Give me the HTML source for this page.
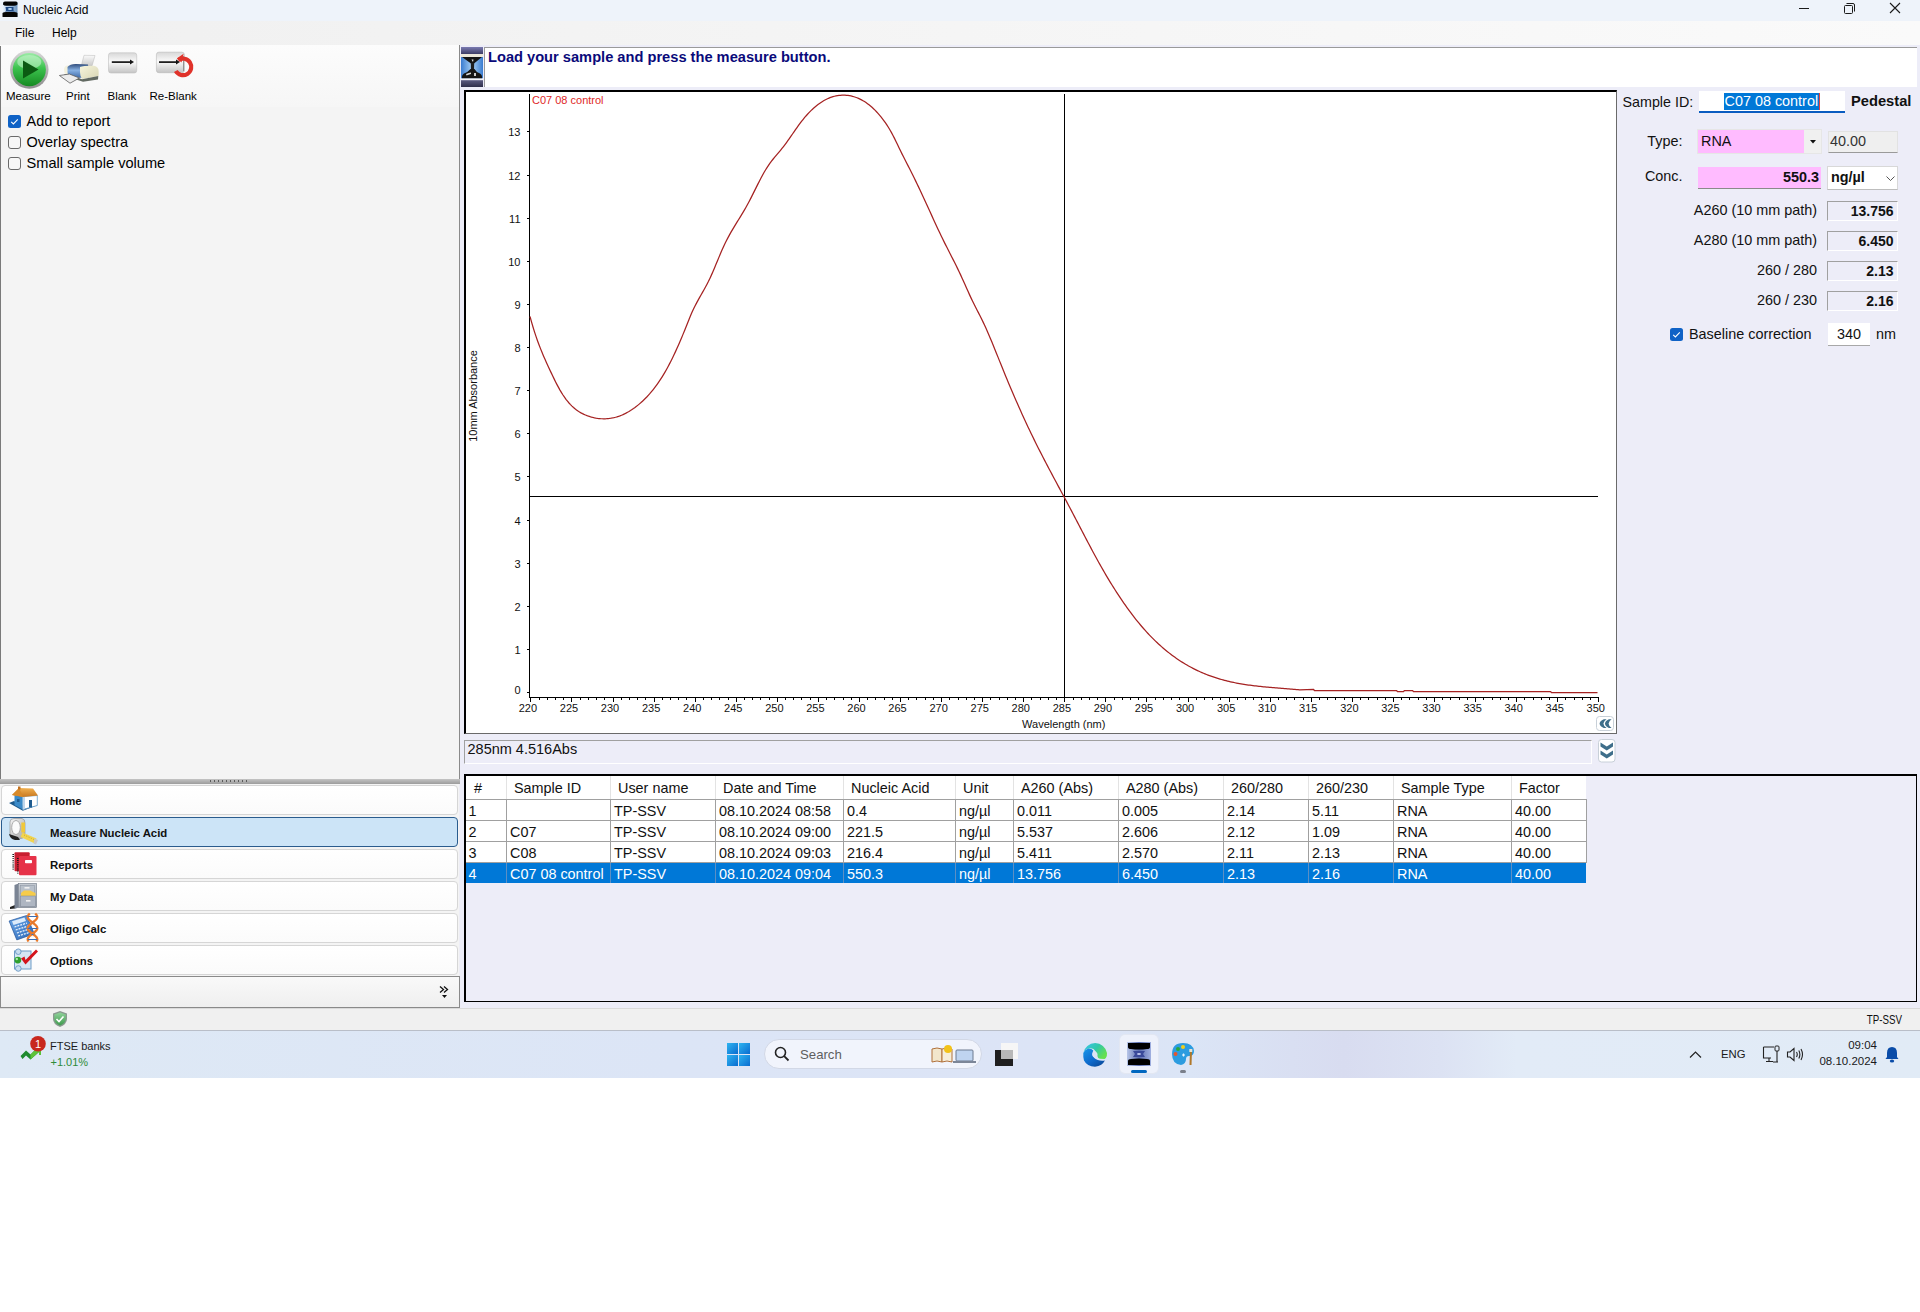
<!DOCTYPE html><html><head><meta charset="utf-8"><style>html,body{margin:0;padding:0;width:1920px;height:1312px;overflow:hidden;position:relative;font-family:"Liberation Sans", sans-serif;background:#fff}</style></head><body><div style="position:absolute;left:0px;top:0px;width:1920px;height:21px;background:#EEF3FA"></div>
<div style="position:absolute;left:0px;top:21px;width:1920px;height:24px;background:linear-gradient(to right,#F0F0F0,#FAFAFA)"></div>
<div style="position:absolute;left:0px;top:45px;width:459px;height:963px;background:#F4F4F4"></div>
<div style="position:absolute;left:0px;top:45px;width:459px;height:62px;background:linear-gradient(#FCFCFC,#F6F6F6)"></div>
<div style="position:absolute;left:0px;top:46px;width:1px;height:734px;background:#7A7A7A"></div>
<div style="position:absolute;left:459px;top:45px;width:1px;height:734px;background:#8A8A8A"></div>
<div style="position:absolute;left:459px;top:784px;width:1px;height:192px;background:#EEEEF6"></div>
<div style="position:absolute;left:460px;top:45px;width:1460px;height:963px;background:#EDEDF8"></div>
<div style="position:absolute;left:0px;top:1078px;width:1920px;height:234px;background:#FFFFFF"></div>
<div style="position:absolute;left:23px;top:3.55px;font-size:12px;font-weight:400;color:#000;line-height:1;white-space:nowrap;">Nucleic Acid</div>
<svg style="position:absolute;left:2px;top:1px" width="16" height="16" viewBox="0 0 16 16">
<defs><linearGradient id="gTi" x1="0" y1="0" x2="1" y2="0"><stop offset="0" stop-color="#EAF4FF"/><stop offset="0.5" stop-color="#A8C4E4"/><stop offset="1" stop-color="#6E96C0"/></linearGradient></defs>
<rect x="0.5" y="1" width="15" height="15" fill="url(#gTi)"/>
<path d="M1 2.5 Q1 0.5 3 0.5 H14 Q15.5 0.5 15.5 2.5 V3.5 Q14 4.8 12 4.8 H4 Q2 4.8 1 3.5 Z" fill="#050505"/>
<path d="M0.5 12 Q1.5 11 4 11 H12 Q14.5 11 15.5 12 V15.5 Q15.5 16 15 16 H1 Q0.5 16 0.5 15.5 Z" fill="#050505"/>
<path d="M3.5 6 H11.5 V9.5 Q12.5 10 13 10.5 H3 Q3.5 10 4 9.5 Z" fill="#1E4A86"/>
<ellipse cx="8" cy="8" rx="2" ry="1" fill="#B8D8F8"/></svg>
<div style="position:absolute;left:1799px;top:8px;width:10px;height:1px;background:#1a1a1a"></div>
<svg style="position:absolute;left:1843px;top:2px" width="13" height="13" viewBox="0 0 13 13" fill="none" stroke="#1a1a1a" stroke-width="1">
<rect x="1.5" y="3.5" width="8" height="8" rx="1"/><path d="M3.5 1.5 H10 Q11.5 1.5 11.5 3 V9.5"/></svg>
<svg style="position:absolute;left:1889px;top:2px" width="12" height="12" viewBox="0 0 12 12" stroke="#1a1a1a" stroke-width="1.1">
<path d="M1 1 L11 11 M11 1 L1 11"/></svg>
<div style="position:absolute;left:15px;top:26.70px;font-size:12px;font-weight:400;color:#000;line-height:1;white-space:nowrap;">File</div>
<div style="position:absolute;left:52px;top:26.70px;font-size:12px;font-weight:400;color:#000;line-height:1;white-space:nowrap;">Help</div>
<svg style="position:absolute;left:0;top:45px" width="210" height="45" viewBox="0 45 210 45">
<defs>
<linearGradient id="gRing" x1="0" y1="0" x2="0" y2="1"><stop offset="0" stop-color="#D8D8D8"/><stop offset="1" stop-color="#8E8E8E"/></linearGradient>
<linearGradient id="gGreen" x1="0" y1="0" x2="0" y2="1"><stop offset="0" stop-color="#9BEBA6"/><stop offset="0.45" stop-color="#3CC34E"/><stop offset="1" stop-color="#168A22"/></linearGradient>
<linearGradient id="gBlank" x1="0" y1="0" x2="0" y2="1"><stop offset="0" stop-color="#F4F4F4"/><stop offset="0.5" stop-color="#DCDCDC"/><stop offset="1" stop-color="#C4C4C4"/></linearGradient>
</defs>
<circle cx="29.3" cy="69.6" r="19.2" fill="url(#gRing)"/>
<circle cx="29.3" cy="69.6" r="16.6" fill="url(#gGreen)"/>
<ellipse cx="29.3" cy="62" rx="12" ry="7" fill="#C8F5CE" opacity="0.55"/>
<path d="M23 60.5 L23 78.5 L38.5 69.5 Z" fill="#0B5A12"/>
<!-- printer -->
<linearGradient id="gPb" x1="0" y1="0" x2="0" y2="1"><stop offset="0" stop-color="#2E4A7A"/><stop offset="0.45" stop-color="#86B0E2"/><stop offset="1" stop-color="#3E6AA8"/></linearGradient>
<linearGradient id="gPc" x1="0" y1="0" x2="1" y2="1"><stop offset="0" stop-color="#F6F4DC"/><stop offset="1" stop-color="#D8D6B4"/></linearGradient>
<linearGradient id="gPp" x1="0" y1="0" x2="0" y2="1"><stop offset="0" stop-color="#FAFAFA"/><stop offset="1" stop-color="#C8C8C8"/></linearGradient>
<path d="M84 55.3 L95 55.5 L92 66 L81.2 66 Z" fill="url(#gPp)" stroke="#B8B8B8" stroke-width="0.5"/>
<path d="M64 70 Q64 65.5 68 65.5 L70 66 L70 74 L66 74 Q64 73 64 70 Z" fill="#F2F0DC"/>
<path d="M67.5 67 Q70 63.8 76 63.9 L88 64.5 L89 77.5 L70 78 Q67.5 76 67.5 72 Z" fill="url(#gPb)"/>
<path d="M80 67 Q84 65.6 94 65.8 Q98.8 66.5 98.7 72 L98.5 76 L82 79 Q80 76 80 72 Z" fill="url(#gPc)"/>
<path d="M64.5 74 L70 75 L82 79.2 L98.3 76 L98 79.5 L83 81.8 L70 77.5 L64.5 76 Z" fill="#626A62"/>
<path d="M59.4 75.5 L69.4 74 L79.4 78 L70 83.2 Z" fill="#ECECEC" stroke="#5E5E5E" stroke-width="0.8"/>
<!-- blank -->
<linearGradient id="gBl2" x1="0" y1="0" x2="0" y2="1"><stop offset="0" stop-color="#D8D8D8"/><stop offset="0.45" stop-color="#FAFAFA"/><stop offset="1" stop-color="#C4C4C4"/></linearGradient>
<rect x="108.5" y="52.8" width="28.2" height="20.2" rx="2.5" fill="url(#gBl2)" stroke="#C0C0C0" stroke-width="0.6"/>
<path d="M111.8 62.1 H131" stroke="#151515" stroke-width="1.7"/><path d="M130 59.6 L134 62.1 L130 64.6 Z" fill="#151515"/>
<!-- reblank -->
<rect x="156.4" y="52.2" width="28" height="20.5" rx="2.5" fill="url(#gBl2)" stroke="#B8B8B8" stroke-width="0.6"/>
<path d="M183.6 56 V71" stroke="#8A8A8A" stroke-width="1"/>
<path d="M159 62.1 H177" stroke="#151515" stroke-width="1.7"/><path d="M176 59.6 L180 62.1 L176 64.6 Z" fill="#151515"/>
<path d="M178.2 60.1 A8.3 8.3 0 1 1 175.8 71.05" fill="none" stroke="#E0322A" stroke-width="4.2"/>
<path d="M177 58.2 L183.6 53.8 L181.5 62.5 Z" fill="#E0322A"/>
</svg>
<div style="position:absolute;left:6px;top:91.12px;font-size:11.5px;font-weight:400;color:#000;line-height:1;white-space:nowrap;">Measure</div>
<div style="position:absolute;left:66px;top:91.12px;font-size:11.5px;font-weight:400;color:#000;line-height:1;white-space:nowrap;">Print</div>
<div style="position:absolute;left:107.5px;top:91.12px;font-size:11.5px;font-weight:400;color:#000;line-height:1;white-space:nowrap;">Blank</div>
<div style="position:absolute;left:149.5px;top:91.12px;font-size:11.5px;font-weight:400;color:#000;line-height:1;white-space:nowrap;">Re-Blank</div>
<svg style="position:absolute;left:8px;top:115px" width="13" height="13" viewBox="0 0 13 13"><rect x="0" y="0" width="13" height="13" rx="2.5" fill="#0F62C6"/><path d="M3.2 6.8 L5.4 9 L9.8 4.4" fill="none" stroke="#fff" stroke-width="1.1"/></svg>
<svg style="position:absolute;left:8px;top:136px" width="13" height="13" viewBox="0 0 13 13"><rect x="0.5" y="0.5" width="12" height="12" rx="2.5" fill="#F7F7F7" stroke="#6A6A6A" stroke-width="1"/></svg>
<svg style="position:absolute;left:8px;top:157px" width="13" height="13" viewBox="0 0 13 13"><rect x="0.5" y="0.5" width="12" height="12" rx="2.5" fill="#F7F7F7" stroke="#6A6A6A" stroke-width="1"/></svg>
<div style="position:absolute;left:26.5px;top:114.38px;font-size:14.5px;font-weight:400;color:#000;line-height:1;white-space:nowrap;">Add to report</div>
<div style="position:absolute;left:26.5px;top:135.18px;font-size:14.5px;font-weight:400;color:#000;line-height:1;white-space:nowrap;">Overlay spectra</div>
<div style="position:absolute;left:26.5px;top:156.09px;font-size:14.6px;font-weight:400;color:#000;line-height:1;white-space:nowrap;">Small sample volume</div>
<div style="position:absolute;left:0px;top:779px;width:460px;height:5px;background:linear-gradient(#C4C4C4,#9C9C9C)"></div>
<div style="position:absolute;left:210px;top:780px;width:40px;height:2px;background:repeating-linear-gradient(to right,#5A5A5A 0 1px,transparent 1px 4px)"></div>
<div style="position:absolute;left:1px;top:785px;width:457px;height:30px;box-sizing:border-box;border:1px solid #D6D6D6;border-radius:4px;background:linear-gradient(#FFFFFF,#FBFBFB)"></div>
<div style="position:absolute;left:50px;top:796.21px;font-size:11.4px;font-weight:700;color:#111;line-height:1;white-space:nowrap;">Home</div>
<div style="position:absolute;left:1px;top:817px;width:457px;height:30px;box-sizing:border-box;border:1px solid #2A5C8E;border-radius:4px;background:#CCE4F7"></div>
<div style="position:absolute;left:50px;top:828.21px;font-size:11.4px;font-weight:700;color:#111;line-height:1;white-space:nowrap;">Measure Nucleic Acid</div>
<div style="position:absolute;left:1px;top:849px;width:457px;height:30px;box-sizing:border-box;border:1px solid #D6D6D6;border-radius:4px;background:linear-gradient(#FFFFFF,#FBFBFB)"></div>
<div style="position:absolute;left:50px;top:860.21px;font-size:11.4px;font-weight:700;color:#111;line-height:1;white-space:nowrap;">Reports</div>
<div style="position:absolute;left:1px;top:881px;width:457px;height:30px;box-sizing:border-box;border:1px solid #D6D6D6;border-radius:4px;background:linear-gradient(#FFFFFF,#FBFBFB)"></div>
<div style="position:absolute;left:50px;top:892.21px;font-size:11.4px;font-weight:700;color:#111;line-height:1;white-space:nowrap;">My Data</div>
<div style="position:absolute;left:1px;top:913px;width:457px;height:30px;box-sizing:border-box;border:1px solid #D6D6D6;border-radius:4px;background:linear-gradient(#FFFFFF,#FBFBFB)"></div>
<div style="position:absolute;left:50px;top:924.21px;font-size:11.4px;font-weight:700;color:#111;line-height:1;white-space:nowrap;">Oligo Calc</div>
<div style="position:absolute;left:1px;top:945px;width:457px;height:30px;box-sizing:border-box;border:1px solid #D6D6D6;border-radius:4px;background:linear-gradient(#FFFFFF,#FBFBFB)"></div>
<div style="position:absolute;left:50px;top:956.21px;font-size:11.4px;font-weight:700;color:#111;line-height:1;white-space:nowrap;">Options</div>
<div style="position:absolute;left:0px;top:976px;width:460px;height:32px;box-sizing:border-box;border:1px solid #8A8A8A;border-right:1px solid #8A8A8A;background:linear-gradient(#F9F9F9,#EFEFEF)"></div>
<svg style="position:absolute;left:439px;top:985px" width="12" height="15" viewBox="0 0 12 15"><path d="M1 1.5 L4.5 4.5 L1 7.5 M5 1.5 L8.5 4.5 L5 7.5" fill="none" stroke="#111" stroke-width="1.3"/><path d="M3 10 H8 L5.5 13 Z" fill="#111"/></svg>
<svg style="position:absolute;left:0;top:780px" width="45" height="200" viewBox="0 780 45 200">
<defs>
<linearGradient id="gRoof" x1="0" y1="0" x2="0" y2="1"><stop offset="0" stop-color="#F0B050"/><stop offset="1" stop-color="#C87820"/></linearGradient>
<linearGradient id="gTape" x1="0" y1="0" x2="1" y2="1"><stop offset="0" stop-color="#F4F4F4"/><stop offset="1" stop-color="#A8A8A8"/></linearGradient>
<linearGradient id="gCab" x1="0" y1="0" x2="0" y2="1"><stop offset="0" stop-color="#C4CAD2"/><stop offset="1" stop-color="#98A0AC"/></linearGradient>
<linearGradient id="gCalc" x1="0" y1="0" x2="1" y2="1"><stop offset="0" stop-color="#6CA8E8"/><stop offset="1" stop-color="#2C68B8"/></linearGradient>
</defs>
<!-- home -->
<path d="M9 803 L14 801 L22.8 805.5 L37 803 L37 805.5 L22.8 810.8 Z" fill="#1E5A8C"/>
<path d="M14.5 795 L22.8 796.5 L22.8 809.5 L14.5 805 Z" fill="#3A8AC8"/>
<path d="M22.8 796.5 L37.3 795.5 L37.3 805.5 L22.8 809.5 Z" fill="#FFFFFF" stroke="#5E9CCB" stroke-width="0.8"/>
<path d="M22.8 796.5 L25 796.3 L25 809.2 L22.8 809.5 Z" fill="#BFD6EA"/>
<rect x="29" y="800" width="3" height="7.5" fill="#1F5C90"/>
<rect x="17" y="799" width="2.5" height="3" fill="#1F5C90"/>
<path d="M12 795 L19 788 L33 788.5 L38 795.5 L22.8 797 Z" fill="url(#gRoof)"/>
<path d="M12 795 L19 788 L23 796.8 Z" fill="#D88A2A"/>
<rect x="18" y="786.5" width="2.5" height="3" fill="#C07020"/>
<!-- tape measure -->
<path d="M10 822 Q10 818.5 14 818.5 L22 818.5 Q25 819 25 823 L25 834 Q25 838.5 20 838.5 L14 838.5 Q10 838 10 834 Z" fill="url(#gTape)" stroke="#8A8A8A" stroke-width="0.6"/>
<ellipse cx="16" cy="827.5" rx="4.3" ry="7" fill="#FBFBFB" stroke="#9A9A9A" stroke-width="0.8"/>
<path d="M9 834 Q10 839 15 840 L20 840 L18 837 Z" fill="#222"/>
<path d="M21.3 822.5 L25 822.5 L25 832.5 L21.3 832.5 Z" fill="#F0C83A"/>
<path d="M22.5 832.5 L36.5 838.5 L34.3 843.2 L20.6 837 Z" fill="#F2D44E"/>
<path d="M24 835 L34 839.5" stroke="#A88A20" stroke-width="0.6" stroke-dasharray="1 1.5"/>
<path d="M34.5 838.5 L38 840 L36 844.5 L33.5 843.5 Z" fill="#C8C8C8"/>
<!-- reports -->
<rect x="14.5" y="852.3" width="15.2" height="19" rx="1" fill="#C81E30"/>
<rect x="19" y="856" width="17.5" height="19.2" rx="1" fill="#E63248"/>
<rect x="25" y="860" width="7" height="3.2" rx="0.8" fill="#fff"/>
<path d="M13.2 854 V870 M17.8 858 V874" stroke="#1a1a1a" stroke-width="1.6" stroke-dasharray="0.9 1.2"/>
<!-- my data -->
<path d="M10 907 L15 905 L15 908.5 L10 909 Z" fill="#222"/>
<path d="M14.5 885 L18.5 883.5 L18.5 907.5 L14.5 909 Z" fill="#7A8494"/>
<rect x="18.5" y="883.5" width="18" height="24" fill="url(#gCab)" stroke="#6E7886" stroke-width="0.6"/>
<rect x="20.5" y="885.5" width="14" height="8.5" fill="#B8C0CA" stroke="#8A94A2" stroke-width="0.5"/>
<rect x="24.5" y="887" width="5" height="1.6" fill="#F0F0F0"/>
<path d="M21 893 L24 890.5 L30 890.5 L35.5 893 L35.5 896 L21 896 Z" fill="#F6CC4A"/>
<rect x="20.5" y="896" width="15" height="10.5" fill="#AEB6C2" stroke="#7C8694" stroke-width="0.5"/>
<rect x="26" y="900" width="4.5" height="1.6" fill="#F0F0F0"/>
<!-- oligo calc -->
<path d="M9.1 921 L26.6 915.5 L34.3 933.8 L16.8 939.9 Z" fill="url(#gCalc)" stroke="#23539A" stroke-width="0.7"/>
<path d="M12 921.3 L24.5 917.5 L26 921 L13.5 925 Z" fill="#DCEBFA"/>
<path d="M14.5 927 L27 923 M15.7 930 L28.2 926 M16.9 933 L29.4 929 M18.1 936 L30.6 932" stroke="#E8F2FC" stroke-width="1.3" stroke-dasharray="2 1"/>
<path d="M35.21 913.50 L36.20 914.50 L36.90 915.50 L37.26 916.50 L37.25 917.50 L36.86 918.50 L36.13 919.50 L35.12 920.50 L33.91 921.50 L32.58 922.50 L31.25 923.50 L30.02 924.50 L28.98 925.50 L28.21 926.50 L27.78 927.50 L27.72 928.50 L28.03 929.50 L28.70 930.50 L29.66 931.50 L30.84 932.50 L32.15 933.50 L33.49 934.50 L34.75 935.50 L35.84 936.50 L36.66 937.50 L37.16 938.50 L37.30 939.50 L37.06 940.50 L36.46 941.50" fill="none" stroke="#EA7A2A" stroke-width="2.3"/>
<path d="M29.79 913.50 L28.80 914.50 L28.10 915.50 L27.74 916.50 L27.75 917.50 L28.14 918.50 L28.87 919.50 L29.88 920.50 L31.09 921.50 L32.42 922.50 L33.75 923.50 L34.98 924.50 L36.02 925.50 L36.79 926.50 L37.22 927.50 L37.28 928.50 L36.97 929.50 L36.30 930.50 L35.34 931.50 L34.16 932.50 L32.85 933.50 L31.51 934.50 L30.25 935.50 L29.16 936.50 L28.34 937.50 L27.84 938.50 L27.70 939.50 L27.94 940.50 L28.54 941.50" fill="none" stroke="#EA7A2A" stroke-width="2.3"/>
<path d="M27.7 916.5 H37.3 M32.4 922.5 H32.6 M27.7 928.5 H37.3 M31.5 934.5 H33.5 M27.7 939.5 H37.3" stroke="#3C6EB4" stroke-width="1.2"/>
<!-- options -->
<rect x="14.5" y="951" width="16.5" height="18" fill="#D6E6F4" stroke="#6E9CC6" stroke-width="1"/>
<circle cx="18.3" cy="951.7" r="2.8" fill="#C8DDF0" stroke="#5D8FBF" stroke-width="0.8"/>
<circle cx="17.8" cy="960.1" r="3.4" fill="#2EA02E"/>
<circle cx="16.8" cy="959" r="1.2" fill="#A8E8A8"/>
<circle cx="18.3" cy="968.5" r="2.8" fill="#C8DDF0" stroke="#5D8FBF" stroke-width="0.8"/>
<path d="M21 958.5 L24.5 956.5 L25.5 960 L36 949.5 L38 951.5 L25.5 964.5 Z" fill="#D4141C"/>
</svg>
<svg style="position:absolute;left:461px;top:47px" width="22" height="40" viewBox="0 0 22 40">
<defs>
<linearGradient id="gHt" x1="0" y1="0" x2="0" y2="1"><stop offset="0" stop-color="#7A7AB0"/><stop offset="1" stop-color="#3E3E66"/></linearGradient>
<linearGradient id="gHb" x1="0" y1="0" x2="0" y2="1"><stop offset="0" stop-color="#5A5A80"/><stop offset="1" stop-color="#2E2E4A"/></linearGradient>
<linearGradient id="gHm" x1="0" y1="0" x2="1" y2="0"><stop offset="0" stop-color="#3A7CD0"/><stop offset="0.5" stop-color="#A8D0F4"/><stop offset="1" stop-color="#3A7CD0"/></linearGradient>
</defs>
<rect x="0" y="0" width="22" height="7" fill="url(#gHt)"/>
<rect x="0" y="7" width="22" height="3" fill="#ECE8DA"/>
<rect x="0" y="10" width="22" height="21.5" fill="url(#gHm)"/>
<path d="M1 10 H21 L13 16.5 L11.5 18 L10 16.5 Z" fill="#141414"/>
<path d="M9.8 16 L13.2 16 L13 23.5 L10 23.5 Z" fill="#1E1E1E"/>
<path d="M10.5 12.5 L12.5 12.5 L12 15 Z" fill="#E8E8E8"/>
<path d="M9.5 22 L13.5 22 Q15 25 19 26.5 Q21.5 28 21 31.5 L1 31.5 Q0.5 28 3 26.5 Q7 25 9.5 22 Z" fill="#151515"/>
<path d="M5 27 Q8 25.5 10 25.5 L10 27 Q7.5 27.5 5.5 28.5 Z" fill="#D8D8D8"/>
<rect x="13" y="26" width="2" height="3" fill="#C8C8C8"/>
<rect x="0" y="31.5" width="22" height="1.7" fill="#F4F4F8"/>
<rect x="0" y="33.2" width="22" height="6.8" fill="url(#gHb)"/>
</svg>
<div style="position:absolute;left:484px;top:47px;width:1433px;height:40px;background:#FFFFFF;border-top:1px solid #9A9A9A;border-left:1px solid #9A9A9A;box-sizing:border-box"></div>
<div style="position:absolute;left:488px;top:49.65px;font-size:14.65px;font-weight:700;color:#0A0A7A;line-height:1;white-space:nowrap;">Load your sample and press the measure button.</div>
<div style="position:absolute;left:464px;top:90px;width:1153px;height:644px;box-sizing:border-box;background:#fff;border-left:2px solid #000;border-top:2px solid #000;border-right:1px solid #6A6A6A;border-bottom:1px solid #6A6A6A"></div>
<svg style="position:absolute;left:0;top:0" width="1920" height="740" viewBox="0 0 1920 740" shape-rendering="crispEdges">
<path d="M529.5 94 V697.5 H1598.5" fill="none" stroke="#000" stroke-width="1"/>
<path d="M527 692.5 H529 M527 649.5 H529 M527 606.5 H529 M527 563.5 H529 M527 520.5 H529 M527 476.5 H529 M527 433.5 H529 M527 390.5 H529 M527 347.5 H529 M527 304.5 H529 M527 261.5 H529 M527 218.5 H529 M527 175.5 H529 M527 131.5 H529 M530.5 698 V702 M539.5 698 V700 M547.5 698 V700 M555.5 698 V700 M563.5 698 V700 M571.5 698 V702 M580.5 698 V700 M588.5 698 V700 M596.5 698 V700 M604.5 698 V700 M613.5 698 V702 M621.5 698 V700 M629.5 698 V700 M637.5 698 V700 M645.5 698 V700 M654.5 698 V702 M662.5 698 V700 M670.5 698 V700 M678.5 698 V700 M686.5 698 V700 M695.5 698 V702 M703.5 698 V700 M711.5 698 V700 M719.5 698 V700 M728.5 698 V700 M736.5 698 V702 M744.5 698 V700 M752.5 698 V700 M760.5 698 V700 M769.5 698 V700 M777.5 698 V702 M785.5 698 V700 M793.5 698 V700 M801.5 698 V700 M810.5 698 V700 M818.5 698 V702 M826.5 698 V700 M834.5 698 V700 M843.5 698 V700 M851.5 698 V700 M859.5 698 V702 M867.5 698 V700 M875.5 698 V700 M884.5 698 V700 M892.5 698 V700 M900.5 698 V702 M908.5 698 V700 M916.5 698 V700 M925.5 698 V700 M933.5 698 V700 M941.5 698 V702 M949.5 698 V700 M958.5 698 V700 M966.5 698 V700 M974.5 698 V700 M982.5 698 V702 M990.5 698 V700 M999.5 698 V700 M1007.5 698 V700 M1015.5 698 V700 M1023.5 698 V702 M1031.5 698 V700 M1040.5 698 V700 M1048.5 698 V700 M1056.5 698 V700 M1064.5 698 V702 M1073.5 698 V700 M1081.5 698 V700 M1089.5 698 V700 M1097.5 698 V700 M1105.5 698 V702 M1114.5 698 V700 M1122.5 698 V700 M1130.5 698 V700 M1138.5 698 V700 M1146.5 698 V702 M1155.5 698 V700 M1163.5 698 V700 M1171.5 698 V700 M1179.5 698 V700 M1188.5 698 V702 M1196.5 698 V700 M1204.5 698 V700 M1212.5 698 V700 M1220.5 698 V700 M1229.5 698 V702 M1237.5 698 V700 M1245.5 698 V700 M1253.5 698 V700 M1261.5 698 V700 M1270.5 698 V702 M1278.5 698 V700 M1286.5 698 V700 M1294.5 698 V700 M1303.5 698 V700 M1311.5 698 V702 M1319.5 698 V700 M1327.5 698 V700 M1335.5 698 V700 M1344.5 698 V700 M1352.5 698 V702 M1360.5 698 V700 M1368.5 698 V700 M1377.5 698 V700 M1385.5 698 V700 M1393.5 698 V702 M1401.5 698 V700 M1409.5 698 V700 M1418.5 698 V700 M1426.5 698 V700 M1434.5 698 V702 M1442.5 698 V700 M1450.5 698 V700 M1459.5 698 V700 M1467.5 698 V700 M1475.5 698 V702 M1483.5 698 V700 M1492.5 698 V700 M1500.5 698 V700 M1508.5 698 V700 M1516.5 698 V702 M1524.5 698 V700 M1533.5 698 V700 M1541.5 698 V700 M1549.5 698 V700 M1557.5 698 V702 M1565.5 698 V700 M1574.5 698 V700 M1582.5 698 V700 M1590.5 698 V700 M1598.5 698 V702" stroke="#000" stroke-width="1"/>
<path d="M1064.5 94 V697 M529 496.5 H1598" stroke="#000" stroke-width="1"/>
</svg>
<svg style="position:absolute;left:0;top:0" width="1920" height="740" viewBox="0 0 1920 740"><path d="M530.0 316.50 L531.5 321.93 L533.0 327.04 L534.5 331.86 L536.0 336.40 L537.5 340.69 L539.0 344.76 L540.5 348.64 L542.0 352.34 L543.5 355.90 L545.0 359.34 L546.5 362.68 L548.0 365.96 L549.5 369.19 L551.0 372.38 L552.5 375.54 L554.0 378.64 L555.5 381.67 L557.0 384.60 L558.5 387.41 L560.0 390.10 L561.5 392.64 L563.0 395.01 L564.5 397.22 L566.0 399.28 L567.5 401.20 L569.0 402.97 L570.5 404.60 L572.0 406.11 L573.5 407.49 L575.0 408.76 L576.5 409.93 L578.0 410.99 L579.5 411.96 L581.0 412.84 L582.5 413.63 L584.0 414.36 L585.5 415.01 L587.0 415.60 L588.5 416.14 L590.0 416.63 L591.5 417.07 L593.0 417.46 L594.5 417.80 L596.0 418.09 L597.5 418.33 L599.0 418.52 L600.5 418.66 L602.0 418.75 L603.5 418.79 L605.0 418.78 L606.5 418.72 L608.0 418.60 L609.5 418.44 L611.0 418.22 L612.5 417.95 L614.0 417.63 L615.5 417.25 L617.0 416.82 L618.5 416.34 L620.0 415.81 L621.5 415.22 L623.0 414.57 L624.5 413.88 L626.0 413.13 L627.5 412.32 L629.0 411.46 L630.5 410.54 L632.0 409.57 L633.5 408.55 L635.0 407.47 L636.5 406.33 L638.0 405.13 L639.5 403.88 L641.0 402.58 L642.5 401.21 L644.0 399.78 L645.5 398.29 L647.0 396.74 L648.5 395.11 L650.0 393.42 L651.5 391.65 L653.0 389.81 L654.5 387.89 L656.0 385.89 L657.5 383.81 L659.0 381.65 L660.5 379.39 L662.0 377.05 L663.5 374.61 L665.0 372.08 L666.5 369.46 L668.0 366.73 L669.5 363.91 L671.0 360.98 L672.5 357.96 L674.0 354.84 L675.5 351.63 L677.0 348.34 L678.5 344.96 L680.0 341.51 L681.5 337.97 L683.0 334.37 L684.5 330.69 L686.0 326.95 L687.5 323.19 L689.0 319.47 L690.5 315.84 L692.0 312.36 L693.5 309.09 L695.0 306.02 L696.5 303.13 L698.0 300.36 L699.5 297.68 L701.0 295.05 L702.5 292.42 L704.0 289.78 L705.5 287.06 L707.0 284.25 L708.5 281.29 L710.0 278.16 L711.5 274.87 L713.0 271.44 L714.5 267.92 L716.0 264.34 L717.5 260.73 L719.0 257.13 L720.5 253.59 L722.0 250.12 L723.5 246.77 L725.0 243.57 L726.5 240.53 L728.0 237.63 L729.5 234.85 L731.0 232.18 L732.5 229.60 L734.0 227.09 L735.5 224.62 L737.0 222.19 L738.5 219.77 L740.0 217.35 L741.5 214.91 L743.0 212.42 L744.5 209.88 L746.0 207.26 L747.5 204.55 L749.0 201.74 L750.5 198.84 L752.0 195.89 L753.5 192.89 L755.0 189.88 L756.5 186.86 L758.0 183.87 L759.5 180.92 L761.0 178.04 L762.5 175.24 L764.0 172.54 L765.5 169.97 L767.0 167.55 L768.5 165.29 L770.0 163.17 L771.5 161.17 L773.0 159.26 L774.5 157.43 L776.0 155.64 L777.5 153.87 L779.0 152.11 L780.5 150.32 L782.0 148.48 L783.5 146.58 L785.0 144.60 L786.5 142.55 L788.0 140.45 L789.5 138.32 L791.0 136.16 L792.5 133.98 L794.0 131.81 L795.5 129.66 L797.0 127.53 L798.5 125.44 L800.0 123.41 L801.5 121.44 L803.0 119.54 L804.5 117.72 L806.0 115.96 L807.5 114.28 L809.0 112.67 L810.5 111.13 L812.0 109.67 L813.5 108.28 L815.0 106.95 L816.5 105.71 L818.0 104.53 L819.5 103.43 L821.0 102.40 L822.5 101.44 L824.0 100.55 L825.5 99.73 L827.0 98.98 L828.5 98.30 L830.0 97.69 L831.5 97.14 L833.0 96.66 L834.5 96.25 L836.0 95.91 L837.5 95.63 L839.0 95.41 L840.5 95.26 L842.0 95.18 L843.5 95.15 L845.0 95.19 L846.5 95.29 L848.0 95.45 L849.5 95.68 L851.0 95.97 L852.5 96.32 L854.0 96.73 L855.5 97.22 L857.0 97.77 L858.5 98.39 L860.0 99.08 L861.5 99.84 L863.0 100.68 L864.5 101.59 L866.0 102.58 L867.5 103.64 L869.0 104.78 L870.5 106.00 L872.0 107.31 L873.5 108.69 L875.0 110.16 L876.5 111.71 L878.0 113.35 L879.5 115.07 L881.0 116.88 L882.5 118.79 L884.0 120.78 L885.5 122.89 L887.0 125.11 L888.5 127.46 L890.0 129.96 L891.5 132.61 L893.0 135.43 L894.5 138.39 L896.0 141.46 L897.5 144.58 L899.0 147.71 L900.5 150.81 L902.0 153.85 L903.5 156.83 L905.0 159.78 L906.5 162.70 L908.0 165.62 L909.5 168.55 L911.0 171.51 L912.5 174.51 L914.0 177.55 L915.5 180.62 L917.0 183.73 L918.5 186.87 L920.0 190.03 L921.5 193.23 L923.0 196.45 L924.5 199.70 L926.0 202.97 L927.5 206.25 L929.0 209.54 L930.5 212.84 L932.0 216.13 L933.5 219.41 L935.0 222.68 L936.5 225.92 L938.0 229.14 L939.5 232.32 L941.0 235.47 L942.5 238.57 L944.0 241.62 L945.5 244.62 L947.0 247.59 L948.5 250.54 L950.0 253.47 L951.5 256.41 L953.0 259.35 L954.5 262.32 L956.0 265.32 L957.5 268.37 L959.0 271.47 L960.5 274.64 L962.0 277.89 L963.5 281.21 L965.0 284.57 L966.5 287.95 L968.0 291.31 L969.5 294.63 L971.0 297.88 L972.5 301.03 L974.0 304.07 L975.5 307.04 L977.0 309.96 L978.5 312.87 L980.0 315.81 L981.5 318.80 L983.0 321.88 L984.5 325.07 L986.0 328.36 L987.5 331.75 L989.0 335.22 L990.5 338.75 L992.0 342.35 L993.5 346.00 L995.0 349.68 L996.5 353.40 L998.0 357.13 L999.5 360.86 L1001.0 364.60 L1002.5 368.31 L1004.0 372.00 L1005.5 375.66 L1007.0 379.30 L1008.5 382.90 L1010.0 386.47 L1011.5 390.01 L1013.0 393.52 L1014.5 397.00 L1016.0 400.45 L1017.5 403.87 L1019.0 407.25 L1020.5 410.61 L1022.0 413.93 L1023.5 417.23 L1025.0 420.49 L1026.5 423.72 L1028.0 426.91 L1029.5 430.08 L1031.0 433.21 L1032.5 436.31 L1034.0 439.38 L1035.5 442.42 L1037.0 445.43 L1038.5 448.41 L1040.0 451.37 L1041.5 454.31 L1043.0 457.22 L1044.5 460.12 L1046.0 463.00 L1047.5 465.86 L1049.0 468.70 L1050.5 471.54 L1052.0 474.36 L1053.5 477.18 L1055.0 479.99 L1056.5 482.79 L1058.0 485.58 L1059.5 488.38 L1061.0 491.18 L1062.5 493.97 L1064.0 496.77 L1065.5 499.58 L1067.0 502.39 L1068.5 505.21 L1070.0 508.03 L1071.5 510.88 L1073.0 513.73 L1074.5 516.59 L1076.0 519.46 L1077.5 522.34 L1079.0 525.22 L1080.5 528.10 L1082.0 530.98 L1083.5 533.86 L1085.0 536.73 L1086.5 539.60 L1088.0 542.45 L1089.5 545.29 L1091.0 548.11 L1092.5 550.92 L1094.0 553.71 L1095.5 556.48 L1097.0 559.22 L1098.5 561.93 L1100.0 564.62 L1101.5 567.28 L1103.0 569.90 L1104.5 572.50 L1106.0 575.06 L1107.5 577.59 L1109.0 580.09 L1110.5 582.56 L1112.0 585.00 L1113.5 587.41 L1115.0 589.78 L1116.5 592.12 L1118.0 594.43 L1119.5 596.71 L1121.0 598.95 L1122.5 601.16 L1124.0 603.33 L1125.5 605.48 L1127.0 607.59 L1128.5 609.66 L1130.0 611.70 L1131.5 613.71 L1133.0 615.68 L1134.5 617.62 L1136.0 619.52 L1137.5 621.38 L1139.0 623.22 L1140.5 625.01 L1142.0 626.77 L1143.5 628.50 L1145.0 630.19 L1146.5 631.85 L1148.0 633.47 L1149.5 635.06 L1151.0 636.62 L1152.5 638.14 L1154.0 639.64 L1155.5 641.10 L1157.0 642.53 L1158.5 643.92 L1160.0 645.29 L1161.5 646.63 L1163.0 647.94 L1164.5 649.21 L1166.0 650.46 L1167.5 651.68 L1169.0 652.87 L1170.5 654.04 L1172.0 655.17 L1173.5 656.28 L1175.0 657.36 L1176.5 658.41 L1178.0 659.44 L1179.5 660.44 L1181.0 661.42 L1182.5 662.37 L1184.0 663.30 L1185.5 664.20 L1187.0 665.08 L1188.5 665.93 L1190.0 666.76 L1191.5 667.57 L1193.0 668.36 L1194.5 669.12 L1196.0 669.86 L1197.5 670.58 L1199.0 671.28 L1200.5 671.96 L1202.0 672.62 L1203.5 673.26 L1205.0 673.88 L1206.5 674.48 L1208.0 675.06 L1209.5 675.62 L1211.0 676.17 L1212.5 676.70 L1214.0 677.21 L1215.5 677.70 L1217.0 678.18 L1218.5 678.64 L1220.0 679.08 L1221.5 679.51 L1223.0 679.92 L1224.5 680.32 L1226.0 680.71 L1227.5 681.08 L1229.0 681.44 L1230.5 681.78 L1232.0 682.11 L1233.5 682.43 L1235.0 682.74 L1236.5 683.04 L1238.0 683.32 L1239.5 683.59 L1241.0 683.86 L1242.5 684.11 L1244.0 684.35 L1245.5 684.58 L1247.0 684.81 L1248.5 685.02 L1250.0 685.23 L1251.5 685.43 L1253.0 685.62 L1254.5 685.81 L1256.0 685.98 L1257.5 686.16 L1259.0 686.32 L1260.5 686.48 L1262.0 686.63 L1263.5 686.78 L1265.0 686.93 L1266.5 687.07 L1268.0 687.20 L1269.5 687.34 L1271.0 687.47 L1272.5 687.59 L1274.0 687.72 L1275.5 687.84 L1277.0 687.96 L1278.5 688.08 L1280.0 688.20 L1281.5 688.32 L1283.0 688.44 L1284.5 688.56 L1286.0 688.68 L1287.5 688.80 L1289.0 688.92 L1290.5 689.04 L1292.0 689.17 L1293.5 689.30 L1295.0 689.43 L1296.5 689.56 L1298.0 689.70 L1299.5 689.84 L1300.0 689.89 L1313.5 689.5 L1314.5 690.5 L1396.5 690.5 L1397.5 691.5 L1403.5 691.5 L1404.5 690.5 L1412.5 690.5 L1413.5 691.5 L1550.5 691.5 L1551.5 692.5 L1597.5 692.5" fill="none" stroke="#A52222" stroke-width="1.25"/></svg>
<div style="position:absolute;right:1399.5px;top:685.45px;font-size:11px;font-weight:400;color:#111;line-height:1;white-space:nowrap;">0</div>
<div style="position:absolute;right:1399.5px;top:644.65px;font-size:11px;font-weight:400;color:#111;line-height:1;white-space:nowrap;">1</div>
<div style="position:absolute;right:1399.5px;top:601.65px;font-size:11px;font-weight:400;color:#111;line-height:1;white-space:nowrap;">2</div>
<div style="position:absolute;right:1399.5px;top:558.65px;font-size:11px;font-weight:400;color:#111;line-height:1;white-space:nowrap;">3</div>
<div style="position:absolute;right:1399.5px;top:515.65px;font-size:11px;font-weight:400;color:#111;line-height:1;white-space:nowrap;">4</div>
<div style="position:absolute;right:1399.5px;top:471.65px;font-size:11px;font-weight:400;color:#111;line-height:1;white-space:nowrap;">5</div>
<div style="position:absolute;right:1399.5px;top:428.65px;font-size:11px;font-weight:400;color:#111;line-height:1;white-space:nowrap;">6</div>
<div style="position:absolute;right:1399.5px;top:385.65px;font-size:11px;font-weight:400;color:#111;line-height:1;white-space:nowrap;">7</div>
<div style="position:absolute;right:1399.5px;top:342.65px;font-size:11px;font-weight:400;color:#111;line-height:1;white-space:nowrap;">8</div>
<div style="position:absolute;right:1399.5px;top:299.65px;font-size:11px;font-weight:400;color:#111;line-height:1;white-space:nowrap;">9</div>
<div style="position:absolute;right:1399.5px;top:256.65px;font-size:11px;font-weight:400;color:#111;line-height:1;white-space:nowrap;">10</div>
<div style="position:absolute;right:1399.5px;top:213.65px;font-size:11px;font-weight:400;color:#111;line-height:1;white-space:nowrap;">11</div>
<div style="position:absolute;right:1399.5px;top:170.65px;font-size:11px;font-weight:400;color:#111;line-height:1;white-space:nowrap;">12</div>
<div style="position:absolute;right:1399.5px;top:126.65px;font-size:11px;font-weight:400;color:#111;line-height:1;white-space:nowrap;">13</div>
<div style="position:absolute;left:527.9px;transform:translateX(-50%);top:702.65px;font-size:11px;font-weight:400;color:#111;line-height:1;white-space:nowrap;">220</div>
<div style="position:absolute;left:568.973px;transform:translateX(-50%);top:702.65px;font-size:11px;font-weight:400;color:#111;line-height:1;white-space:nowrap;">225</div>
<div style="position:absolute;left:610.046px;transform:translateX(-50%);top:702.65px;font-size:11px;font-weight:400;color:#111;line-height:1;white-space:nowrap;">230</div>
<div style="position:absolute;left:651.119px;transform:translateX(-50%);top:702.65px;font-size:11px;font-weight:400;color:#111;line-height:1;white-space:nowrap;">235</div>
<div style="position:absolute;left:692.192px;transform:translateX(-50%);top:702.65px;font-size:11px;font-weight:400;color:#111;line-height:1;white-space:nowrap;">240</div>
<div style="position:absolute;left:733.265px;transform:translateX(-50%);top:702.65px;font-size:11px;font-weight:400;color:#111;line-height:1;white-space:nowrap;">245</div>
<div style="position:absolute;left:774.338px;transform:translateX(-50%);top:702.65px;font-size:11px;font-weight:400;color:#111;line-height:1;white-space:nowrap;">250</div>
<div style="position:absolute;left:815.4110000000001px;transform:translateX(-50%);top:702.65px;font-size:11px;font-weight:400;color:#111;line-height:1;white-space:nowrap;">255</div>
<div style="position:absolute;left:856.484px;transform:translateX(-50%);top:702.65px;font-size:11px;font-weight:400;color:#111;line-height:1;white-space:nowrap;">260</div>
<div style="position:absolute;left:897.557px;transform:translateX(-50%);top:702.65px;font-size:11px;font-weight:400;color:#111;line-height:1;white-space:nowrap;">265</div>
<div style="position:absolute;left:938.63px;transform:translateX(-50%);top:702.65px;font-size:11px;font-weight:400;color:#111;line-height:1;white-space:nowrap;">270</div>
<div style="position:absolute;left:979.703px;transform:translateX(-50%);top:702.65px;font-size:11px;font-weight:400;color:#111;line-height:1;white-space:nowrap;">275</div>
<div style="position:absolute;left:1020.7760000000001px;transform:translateX(-50%);top:702.65px;font-size:11px;font-weight:400;color:#111;line-height:1;white-space:nowrap;">280</div>
<div style="position:absolute;left:1061.8490000000002px;transform:translateX(-50%);top:702.65px;font-size:11px;font-weight:400;color:#111;line-height:1;white-space:nowrap;">285</div>
<div style="position:absolute;left:1102.922px;transform:translateX(-50%);top:702.65px;font-size:11px;font-weight:400;color:#111;line-height:1;white-space:nowrap;">290</div>
<div style="position:absolute;left:1143.995px;transform:translateX(-50%);top:702.65px;font-size:11px;font-weight:400;color:#111;line-height:1;white-space:nowrap;">295</div>
<div style="position:absolute;left:1185.0680000000002px;transform:translateX(-50%);top:702.65px;font-size:11px;font-weight:400;color:#111;line-height:1;white-space:nowrap;">300</div>
<div style="position:absolute;left:1226.141px;transform:translateX(-50%);top:702.65px;font-size:11px;font-weight:400;color:#111;line-height:1;white-space:nowrap;">305</div>
<div style="position:absolute;left:1267.214px;transform:translateX(-50%);top:702.65px;font-size:11px;font-weight:400;color:#111;line-height:1;white-space:nowrap;">310</div>
<div style="position:absolute;left:1308.287px;transform:translateX(-50%);top:702.65px;font-size:11px;font-weight:400;color:#111;line-height:1;white-space:nowrap;">315</div>
<div style="position:absolute;left:1349.3600000000001px;transform:translateX(-50%);top:702.65px;font-size:11px;font-weight:400;color:#111;line-height:1;white-space:nowrap;">320</div>
<div style="position:absolute;left:1390.433px;transform:translateX(-50%);top:702.65px;font-size:11px;font-weight:400;color:#111;line-height:1;white-space:nowrap;">325</div>
<div style="position:absolute;left:1431.506px;transform:translateX(-50%);top:702.65px;font-size:11px;font-weight:400;color:#111;line-height:1;white-space:nowrap;">330</div>
<div style="position:absolute;left:1472.5790000000002px;transform:translateX(-50%);top:702.65px;font-size:11px;font-weight:400;color:#111;line-height:1;white-space:nowrap;">335</div>
<div style="position:absolute;left:1513.652px;transform:translateX(-50%);top:702.65px;font-size:11px;font-weight:400;color:#111;line-height:1;white-space:nowrap;">340</div>
<div style="position:absolute;left:1554.725px;transform:translateX(-50%);top:702.65px;font-size:11px;font-weight:400;color:#111;line-height:1;white-space:nowrap;">345</div>
<div style="position:absolute;left:1595.7980000000002px;transform:translateX(-50%);top:702.65px;font-size:11px;font-weight:400;color:#111;line-height:1;white-space:nowrap;">350</div>
<div style="position:absolute;left:1063.75px;transform:translateX(-50%);top:719.40px;font-size:11px;font-weight:400;color:#111;line-height:1;white-space:nowrap;">Wavelength (nm)</div>
<div style="position:absolute;left:473.3px;top:395.5px;font-size:11px;line-height:1;white-space:nowrap;color:#111;transform:translate(-50%,-50%) rotate(-90deg);transform-origin:50% 50%">10mm Absorbance</div>
<div style="position:absolute;left:532px;top:95.40px;font-size:11px;font-weight:400;color:#E02828;line-height:1;white-space:nowrap;">C07 08 control</div>
<svg style="position:absolute;left:1596px;top:716px" width="19" height="16" viewBox="0 0 19 16"><rect x="0.5" y="0.5" width="17" height="14" rx="3" fill="#fff" stroke="#C8D0D8"/><path d="M7.8 3.2 Q3.6 5 3.6 7.6 Q3.6 10.2 7.8 12 L10.6 12 Q7.4 10 7.4 7.6 Q7.4 5.2 10.6 3.2 Z M12.9 3.2 Q9 5 9 7.6 Q9 10.2 12.9 12 L15.6 12 Q12.6 10 12.6 7.6 Q12.6 5.2 15.6 3.2 Z" fill="#3E6E8A"/></svg>
<div style="position:absolute;left:464px;top:740px;width:1128px;height:24px;box-sizing:border-box;border-top:1px solid #A0A0A0;border-left:1px solid #A0A0A0;border-bottom:1px solid #FFFFFF;border-right:1px solid #FFFFFF;background:#EDEDF8"></div>
<div style="position:absolute;left:467.5px;top:742.47px;font-size:14.5px;font-weight:400;color:#111;line-height:1;white-space:nowrap;">285nm 4.516Abs</div>
<svg style="position:absolute;left:1598px;top:739px" width="18" height="24" viewBox="0 0 18 24"><rect x="0.5" y="0.5" width="16.5" height="22.5" rx="3" fill="#fff" stroke="#C8D0D8"/><path d="M2.5 3.5 L8.75 7.5 L15 3.5 L15 7.5 L8.75 11.5 L2.5 7.5 Z M2.5 11.5 L8.75 15.5 L15 11.5 L15 15.5 L8.75 19.5 L2.5 15.5 Z" fill="#3E6E8A"/></svg>
<div style="position:absolute;left:1622.5px;top:94.55px;font-size:14.3px;font-weight:400;color:#111;line-height:1;white-space:nowrap;">Sample ID:</div>
<div style="position:absolute;left:1699px;top:91px;width:146px;height:22px;background:#fff;border-bottom:2px solid #0A5CC0;box-sizing:border-box"></div>
<div style="position:absolute;left:1724px;top:93px;width:96px;height:17px;background:#0078D7"></div>
<div style="position:absolute;left:1724.5px;top:94.46px;font-size:14.4px;font-weight:400;color:#fff;line-height:1;white-space:nowrap;">C07 08 control</div>
<div style="position:absolute;left:1819px;top:93px;width:1px;height:17px;background:#E04040"></div>
<div style="position:absolute;left:1851px;top:94.20px;font-size:14.7px;font-weight:700;color:#111;line-height:1;white-space:nowrap;">Pedestal</div>
<div style="position:absolute;right:237.5px;top:134.46px;font-size:14.4px;font-weight:400;color:#111;line-height:1;white-space:nowrap;">Type:</div>
<div style="position:absolute;left:1698px;top:130px;width:123px;height:23px;background:#F0F0F0;outline:1px solid #E6E6E6"></div>
<div style="position:absolute;left:1698px;top:130px;width:106px;height:23px;background:#FFBBFF"></div>
<svg style="position:absolute;left:1809.5px;top:140px" width="6" height="4" viewBox="0 0 6 4"><path d="M0 0 H6 L3 3.5 Z" fill="#111"/></svg>
<div style="position:absolute;left:1701px;top:134.46px;font-size:14.4px;font-weight:400;color:#111;line-height:1;white-space:nowrap;">RNA</div>
<div style="position:absolute;left:1828px;top:131px;width:70px;height:22px;box-sizing:border-box;background:#EFEFEF;border:1px solid #E2E2E2;border-bottom:1px solid #9A9A9A"></div>
<div style="position:absolute;left:1830px;top:134.46px;font-size:14.4px;font-weight:400;color:#333;line-height:1;white-space:nowrap;">40.00</div>
<div style="position:absolute;right:237.5px;top:169.46px;font-size:14.4px;font-weight:400;color:#111;line-height:1;white-space:nowrap;">Conc.</div>
<div style="position:absolute;left:1698px;top:167px;width:123px;height:22px;box-sizing:border-box;background:#FFBBFF;border-bottom:1px solid #8A8A8A"></div>
<div style="position:absolute;right:101px;top:170.06px;font-size:14.4px;font-weight:700;color:#111;line-height:1;white-space:nowrap;">550.3</div>
<div style="position:absolute;left:1827px;top:166px;width:71px;height:24px;box-sizing:border-box;background:#FFFFFF;border:1px solid #D8D8D8;border-bottom:1px solid #BDBDBD"></div>
<div style="position:absolute;left:1831px;top:170.06px;font-size:14.4px;font-weight:700;color:#111;line-height:1;white-space:nowrap;">ng/µl</div>
<svg style="position:absolute;left:1886px;top:176px" width="9" height="6" viewBox="0 0 9 6"><path d="M0.5 0.5 L4.5 4.5 L8.5 0.5" fill="none" stroke="#555" stroke-width="1"/></svg>
<div style="position:absolute;right:103px;top:203.26px;font-size:14.4px;font-weight:400;color:#111;line-height:1;white-space:nowrap;">A260 (10 mm path)</div>
<div style="position:absolute;left:1827px;top:201px;width:71px;height:20px;box-sizing:border-box;background:#EDEDF8;border-top:1px solid #A0A0A0;border-left:1px solid #A0A0A0;border-bottom:1px solid #FFFFFF;border-right:1px solid #FFFFFF"></div>
<div style="position:absolute;right:26.5px;top:203.60px;font-size:14px;font-weight:700;color:#111;line-height:1;white-space:nowrap;">13.756</div>
<div style="position:absolute;right:103px;top:233.26px;font-size:14.4px;font-weight:400;color:#111;line-height:1;white-space:nowrap;">A280 (10 mm path)</div>
<div style="position:absolute;left:1827px;top:231px;width:71px;height:20px;box-sizing:border-box;background:#EDEDF8;border-top:1px solid #A0A0A0;border-left:1px solid #A0A0A0;border-bottom:1px solid #FFFFFF;border-right:1px solid #FFFFFF"></div>
<div style="position:absolute;right:26.5px;top:233.60px;font-size:14px;font-weight:700;color:#111;line-height:1;white-space:nowrap;">6.450</div>
<div style="position:absolute;right:103px;top:263.26px;font-size:14.4px;font-weight:400;color:#111;line-height:1;white-space:nowrap;">260 / 280</div>
<div style="position:absolute;left:1827px;top:261px;width:71px;height:20px;box-sizing:border-box;background:#EDEDF8;border-top:1px solid #A0A0A0;border-left:1px solid #A0A0A0;border-bottom:1px solid #FFFFFF;border-right:1px solid #FFFFFF"></div>
<div style="position:absolute;right:26.5px;top:263.60px;font-size:14px;font-weight:700;color:#111;line-height:1;white-space:nowrap;">2.13</div>
<div style="position:absolute;right:103px;top:293.26px;font-size:14.4px;font-weight:400;color:#111;line-height:1;white-space:nowrap;">260 / 230</div>
<div style="position:absolute;left:1827px;top:291px;width:71px;height:20px;box-sizing:border-box;background:#EDEDF8;border-top:1px solid #A0A0A0;border-left:1px solid #A0A0A0;border-bottom:1px solid #FFFFFF;border-right:1px solid #FFFFFF"></div>
<div style="position:absolute;right:26.5px;top:293.60px;font-size:14px;font-weight:700;color:#111;line-height:1;white-space:nowrap;">2.16</div>
<svg style="position:absolute;left:1670px;top:328px" width="13" height="13" viewBox="0 0 13 13"><rect x="0" y="0" width="13" height="13" rx="2.5" fill="#0F62C6"/><path d="M3.2 6.8 L5.4 9 L9.8 4.4" fill="none" stroke="#fff" stroke-width="1.1"/></svg>
<div style="position:absolute;left:1689px;top:327.36px;font-size:14.4px;font-weight:400;color:#111;line-height:1;white-space:nowrap;">Baseline correction</div>
<div style="position:absolute;left:1828px;top:323px;width:42px;height:23px;box-sizing:border-box;background:#fff;border-bottom:1px solid #A8A8A8"></div>
<div style="position:absolute;left:1849px;transform:translateX(-50%);top:327.36px;font-size:14.4px;font-weight:400;color:#111;line-height:1;white-space:nowrap;">340</div>
<div style="position:absolute;left:1876px;top:327.36px;font-size:14.4px;font-weight:400;color:#111;line-height:1;white-space:nowrap;">nm</div>
<div style="position:absolute;left:464px;top:774px;width:1453px;height:228px;box-sizing:border-box;background:#EDEDF8;border:2px solid #000;border-right:1.5px solid #000;border-bottom:1.5px solid #000"></div>
<div style="position:absolute;left:466px;top:776px;width:1120px;height:23px;background:#fff"></div>
<div style="position:absolute;left:466px;top:799px;width:1120px;height:64px;background:#fff"></div>
<div style="position:absolute;left:466px;top:863px;width:1120px;height:20px;background:#0078D7"></div>
<svg style="position:absolute;left:0;top:0" width="1920" height="900" viewBox="0 0 1920 900" shape-rendering="crispEdges">
<path d="M506.5 776 V799 M610.5 776 V799 M715.5 776 V799 M843.5 776 V799 M955.5 776 V799 M1013.5 776 V799 M1118.5 776 V799 M1223.5 776 V799 M1308.5 776 V799 M1393.5 776 V799 M1511.5 776 V799" stroke="#E3E3E3" stroke-width="1"/>
<path d="M466 799.5 H1586 M466 820.5 H1586 M466 841.5 H1586 M466 862.5 H1586 M506.5 799 V863 M610.5 799 V863 M715.5 799 V863 M843.5 799 V863 M955.5 799 V863 M1013.5 799 V863 M1118.5 799 V863 M1223.5 799 V863 M1308.5 799 V863 M1393.5 799 V863 M1511.5 799 V863 M1586.5 799 V863" stroke="#A0A0A0" stroke-width="1"/>
<path d="M506.5 863 V883 M610.5 863 V883 M715.5 863 V883 M843.5 863 V883 M955.5 863 V883 M1013.5 863 V883 M1118.5 863 V883 M1223.5 863 V883 M1308.5 863 V883 M1393.5 863 V883 M1511.5 863 V883" stroke="#5C8FC4" stroke-width="1"/>
</svg>
<div style="position:absolute;left:474px;top:780.66px;font-size:14.4px;font-weight:400;color:#111;line-height:1;white-space:nowrap;">#</div>
<div style="position:absolute;left:514px;top:780.66px;font-size:14.4px;font-weight:400;color:#111;line-height:1;white-space:nowrap;">Sample ID</div>
<div style="position:absolute;left:618px;top:780.66px;font-size:14.4px;font-weight:400;color:#111;line-height:1;white-space:nowrap;">User name</div>
<div style="position:absolute;left:723px;top:780.66px;font-size:14.4px;font-weight:400;color:#111;line-height:1;white-space:nowrap;">Date and Time</div>
<div style="position:absolute;left:851px;top:780.66px;font-size:14.4px;font-weight:400;color:#111;line-height:1;white-space:nowrap;">Nucleic Acid</div>
<div style="position:absolute;left:963px;top:780.66px;font-size:14.4px;font-weight:400;color:#111;line-height:1;white-space:nowrap;">Unit</div>
<div style="position:absolute;left:1021px;top:780.66px;font-size:14.4px;font-weight:400;color:#111;line-height:1;white-space:nowrap;">A260 (Abs)</div>
<div style="position:absolute;left:1126px;top:780.66px;font-size:14.4px;font-weight:400;color:#111;line-height:1;white-space:nowrap;">A280 (Abs)</div>
<div style="position:absolute;left:1231px;top:780.66px;font-size:14.4px;font-weight:400;color:#111;line-height:1;white-space:nowrap;">260/280</div>
<div style="position:absolute;left:1316px;top:780.66px;font-size:14.4px;font-weight:400;color:#111;line-height:1;white-space:nowrap;">260/230</div>
<div style="position:absolute;left:1401px;top:780.66px;font-size:14.4px;font-weight:400;color:#111;line-height:1;white-space:nowrap;">Sample Type</div>
<div style="position:absolute;left:1519px;top:780.66px;font-size:14.4px;font-weight:400;color:#111;line-height:1;white-space:nowrap;">Factor</div>
<div style="position:absolute;left:468.5px;top:803.56px;font-size:14.4px;font-weight:400;color:#111;line-height:1;white-space:nowrap;">1</div>
<div style="position:absolute;left:510px;top:803.56px;font-size:14.4px;font-weight:400;color:#111;line-height:1;white-space:nowrap;"></div>
<div style="position:absolute;left:614px;top:803.56px;font-size:14.4px;font-weight:400;color:#111;line-height:1;white-space:nowrap;">TP-SSV</div>
<div style="position:absolute;left:719px;top:803.56px;font-size:14.4px;font-weight:400;color:#111;line-height:1;white-space:nowrap;">08.10.2024 08:58</div>
<div style="position:absolute;left:847px;top:803.56px;font-size:14.4px;font-weight:400;color:#111;line-height:1;white-space:nowrap;">0.4</div>
<div style="position:absolute;left:959px;top:803.56px;font-size:14.4px;font-weight:400;color:#111;line-height:1;white-space:nowrap;">ng/µl</div>
<div style="position:absolute;left:1017px;top:803.56px;font-size:14.4px;font-weight:400;color:#111;line-height:1;white-space:nowrap;">0.011</div>
<div style="position:absolute;left:1122px;top:803.56px;font-size:14.4px;font-weight:400;color:#111;line-height:1;white-space:nowrap;">0.005</div>
<div style="position:absolute;left:1227px;top:803.56px;font-size:14.4px;font-weight:400;color:#111;line-height:1;white-space:nowrap;">2.14</div>
<div style="position:absolute;left:1312px;top:803.56px;font-size:14.4px;font-weight:400;color:#111;line-height:1;white-space:nowrap;">5.11</div>
<div style="position:absolute;left:1397px;top:803.56px;font-size:14.4px;font-weight:400;color:#111;line-height:1;white-space:nowrap;">RNA</div>
<div style="position:absolute;left:1515px;top:803.56px;font-size:14.4px;font-weight:400;color:#111;line-height:1;white-space:nowrap;">40.00</div>
<div style="position:absolute;left:468.5px;top:824.56px;font-size:14.4px;font-weight:400;color:#111;line-height:1;white-space:nowrap;">2</div>
<div style="position:absolute;left:510px;top:824.56px;font-size:14.4px;font-weight:400;color:#111;line-height:1;white-space:nowrap;">C07</div>
<div style="position:absolute;left:614px;top:824.56px;font-size:14.4px;font-weight:400;color:#111;line-height:1;white-space:nowrap;">TP-SSV</div>
<div style="position:absolute;left:719px;top:824.56px;font-size:14.4px;font-weight:400;color:#111;line-height:1;white-space:nowrap;">08.10.2024 09:00</div>
<div style="position:absolute;left:847px;top:824.56px;font-size:14.4px;font-weight:400;color:#111;line-height:1;white-space:nowrap;">221.5</div>
<div style="position:absolute;left:959px;top:824.56px;font-size:14.4px;font-weight:400;color:#111;line-height:1;white-space:nowrap;">ng/µl</div>
<div style="position:absolute;left:1017px;top:824.56px;font-size:14.4px;font-weight:400;color:#111;line-height:1;white-space:nowrap;">5.537</div>
<div style="position:absolute;left:1122px;top:824.56px;font-size:14.4px;font-weight:400;color:#111;line-height:1;white-space:nowrap;">2.606</div>
<div style="position:absolute;left:1227px;top:824.56px;font-size:14.4px;font-weight:400;color:#111;line-height:1;white-space:nowrap;">2.12</div>
<div style="position:absolute;left:1312px;top:824.56px;font-size:14.4px;font-weight:400;color:#111;line-height:1;white-space:nowrap;">1.09</div>
<div style="position:absolute;left:1397px;top:824.56px;font-size:14.4px;font-weight:400;color:#111;line-height:1;white-space:nowrap;">RNA</div>
<div style="position:absolute;left:1515px;top:824.56px;font-size:14.4px;font-weight:400;color:#111;line-height:1;white-space:nowrap;">40.00</div>
<div style="position:absolute;left:468.5px;top:845.56px;font-size:14.4px;font-weight:400;color:#111;line-height:1;white-space:nowrap;">3</div>
<div style="position:absolute;left:510px;top:845.56px;font-size:14.4px;font-weight:400;color:#111;line-height:1;white-space:nowrap;">C08</div>
<div style="position:absolute;left:614px;top:845.56px;font-size:14.4px;font-weight:400;color:#111;line-height:1;white-space:nowrap;">TP-SSV</div>
<div style="position:absolute;left:719px;top:845.56px;font-size:14.4px;font-weight:400;color:#111;line-height:1;white-space:nowrap;">08.10.2024 09:03</div>
<div style="position:absolute;left:847px;top:845.56px;font-size:14.4px;font-weight:400;color:#111;line-height:1;white-space:nowrap;">216.4</div>
<div style="position:absolute;left:959px;top:845.56px;font-size:14.4px;font-weight:400;color:#111;line-height:1;white-space:nowrap;">ng/µl</div>
<div style="position:absolute;left:1017px;top:845.56px;font-size:14.4px;font-weight:400;color:#111;line-height:1;white-space:nowrap;">5.411</div>
<div style="position:absolute;left:1122px;top:845.56px;font-size:14.4px;font-weight:400;color:#111;line-height:1;white-space:nowrap;">2.570</div>
<div style="position:absolute;left:1227px;top:845.56px;font-size:14.4px;font-weight:400;color:#111;line-height:1;white-space:nowrap;">2.11</div>
<div style="position:absolute;left:1312px;top:845.56px;font-size:14.4px;font-weight:400;color:#111;line-height:1;white-space:nowrap;">2.13</div>
<div style="position:absolute;left:1397px;top:845.56px;font-size:14.4px;font-weight:400;color:#111;line-height:1;white-space:nowrap;">RNA</div>
<div style="position:absolute;left:1515px;top:845.56px;font-size:14.4px;font-weight:400;color:#111;line-height:1;white-space:nowrap;">40.00</div>
<div style="position:absolute;left:468.5px;top:866.56px;font-size:14.4px;font-weight:400;color:#fff;line-height:1;white-space:nowrap;">4</div>
<div style="position:absolute;left:510px;top:866.56px;font-size:14.4px;font-weight:400;color:#fff;line-height:1;white-space:nowrap;">C07 08 control</div>
<div style="position:absolute;left:614px;top:866.56px;font-size:14.4px;font-weight:400;color:#fff;line-height:1;white-space:nowrap;">TP-SSV</div>
<div style="position:absolute;left:719px;top:866.56px;font-size:14.4px;font-weight:400;color:#fff;line-height:1;white-space:nowrap;">08.10.2024 09:04</div>
<div style="position:absolute;left:847px;top:866.56px;font-size:14.4px;font-weight:400;color:#fff;line-height:1;white-space:nowrap;">550.3</div>
<div style="position:absolute;left:959px;top:866.56px;font-size:14.4px;font-weight:400;color:#fff;line-height:1;white-space:nowrap;">ng/µl</div>
<div style="position:absolute;left:1017px;top:866.56px;font-size:14.4px;font-weight:400;color:#fff;line-height:1;white-space:nowrap;">13.756</div>
<div style="position:absolute;left:1122px;top:866.56px;font-size:14.4px;font-weight:400;color:#fff;line-height:1;white-space:nowrap;">6.450</div>
<div style="position:absolute;left:1227px;top:866.56px;font-size:14.4px;font-weight:400;color:#fff;line-height:1;white-space:nowrap;">2.13</div>
<div style="position:absolute;left:1312px;top:866.56px;font-size:14.4px;font-weight:400;color:#fff;line-height:1;white-space:nowrap;">2.16</div>
<div style="position:absolute;left:1397px;top:866.56px;font-size:14.4px;font-weight:400;color:#fff;line-height:1;white-space:nowrap;">RNA</div>
<div style="position:absolute;left:1515px;top:866.56px;font-size:14.4px;font-weight:400;color:#fff;line-height:1;white-space:nowrap;">40.00</div>
<div style="position:absolute;left:0px;top:1008px;width:1920px;height:22px;background:#F0F0F0;border-top:1px solid #DADADA;box-sizing:border-box"></div>
<svg style="position:absolute;left:51px;top:1010px" width="18" height="18" viewBox="0 0 18 18">
<defs><linearGradient id="gSh" x1="0" y1="0" x2="0" y2="1"><stop offset="0" stop-color="#8FD39A"/><stop offset="1" stop-color="#3E9A4C"/></linearGradient></defs>
<path d="M9 1 L16 3.5 V9 Q16 14 9 17 Q2 14 2 9 V3.5 Z" fill="#8A9A90"/>
<path d="M9 2.5 L14.7 4.5 V9 Q14.7 13 9 15.5 Q3.3 13 3.3 9 V4.5 Z" fill="url(#gSh)"/>
<path d="M5.5 9 L8 11.5 L12.5 6.5" fill="none" stroke="#fff" stroke-width="1.6"/></svg>
<div style="position:absolute;right:18px;top:1013.83px;font-size:12.2px;font-weight:400;color:#111;line-height:1;white-space:nowrap;transform:scaleX(0.8);transform-origin:100% 50%;">TP-SSV</div>
<div style="position:absolute;left:0px;top:1030px;width:1920px;height:48px;background:linear-gradient(to right,#DEE9F5 0%,#DCE5F6 35%,#DCE4F6 55%,#DBE5F6 62%,#D8DCF0 70%,#DCE2F3 75%,#E2EBF7 79%,#E1EBF6 100%);border-top:1px solid #B9BEC8;box-sizing:border-box"></div>
<svg style="position:absolute;left:18px;top:1034px" width="30" height="30" viewBox="0 0 30 30">
<path d="M3 23 L9 17 L13 20 L19 14 L21 16 L15 22 L13 20" fill="none"/>
<path d="M2.5 22 L8 16.5 L12.5 20.5 L18 15 L23 15 L23 21 L21 21 L21 18 L12.5 25.5 L8 21.5 L4.5 25 Z" fill="#1E8A2E"/>
<path d="M12.5 20.5 L18 15 L23 15 L23 21 L21 21 L21 18 L12.5 25.5 Z" fill="#5CC23A"/>
<circle cx="20" cy="9.8" r="7.8" fill="#C8281E"/>
<text x="20" y="13.8" font-size="11" fill="#fff" text-anchor="middle" font-family="Liberation Sans">1</text></svg>
<div style="position:absolute;left:50px;top:1041.15px;font-size:11px;font-weight:400;color:#1a1a1a;line-height:1;white-space:nowrap;">FTSE banks</div>
<div style="position:absolute;left:50.5px;top:1056.95px;font-size:11px;font-weight:400;color:#2E8B3A;line-height:1;white-space:nowrap;">+1.01%</div>
<svg style="position:absolute;left:727px;top:1043px" width="23" height="23" viewBox="0 0 23 23">
<defs><linearGradient id="gWin" x1="0" y1="0" x2="1" y2="1"><stop offset="0" stop-color="#2EB4F0"/><stop offset="1" stop-color="#0A6CD0"/></linearGradient></defs>
<rect x="0" y="0" width="11" height="11" fill="url(#gWin)"/><rect x="12" y="0" width="11" height="11" fill="url(#gWin)"/>
<rect x="0" y="12" width="11" height="11" fill="url(#gWin)"/><rect x="12" y="12" width="11" height="11" fill="url(#gWin)"/></svg>
<div style="position:absolute;left:764px;top:1039px;width:218px;height:30px;box-sizing:border-box;background:#F1F4FC;border:1px solid #D2D8E6;border-radius:15px"></div>
<svg style="position:absolute;left:774px;top:1046px" width="16" height="16" viewBox="0 0 16 16">
<circle cx="6.5" cy="6.5" r="5" fill="none" stroke="#222" stroke-width="1.6"/><path d="M10.2 10.2 L14.5 14.5" stroke="#222" stroke-width="1.8"/></svg>
<div style="position:absolute;left:800px;top:1047.78px;font-size:13.2px;font-weight:400;color:#5E5E5E;line-height:1;white-space:nowrap;">Search</div>
<svg style="position:absolute;left:931px;top:1044px" width="46" height="20" viewBox="0 0 46 20">
<path d="M1 5 Q6 3 11 5 L11 18 Q6 16 1 18 Z" fill="#F2E6CC" stroke="#B0703A" stroke-width="1"/>
<path d="M11 5 Q16 3 21 5 L21 18 Q16 16 11 18 Z" fill="#F6EEDA" stroke="#B0703A" stroke-width="1"/>
<circle cx="17" cy="5" r="4" fill="#F2C21A"/>
<rect x="25" y="6" width="17" height="11" rx="1" fill="#BFD4F0" stroke="#6C7A90" stroke-width="1"/>
<path d="M22 18 H45" stroke="#7C8698" stroke-width="2"/></svg>
<svg style="position:absolute;left:995px;top:1043px" width="24" height="23" viewBox="0 0 24 23">
<rect x="6" y="0" width="17" height="16" fill="#F6F6F6"/><rect x="0" y="7" width="18" height="16" fill="#1F1F1F"/>
<rect x="6" y="7" width="12" height="9" fill="#B8B8B8"/></svg>
<svg style="position:absolute;left:1083px;top:1042px" width="25" height="25" viewBox="0 0 25 25">
<defs><linearGradient id="gE1" x1="0" y1="0" x2="1" y2="0.6"><stop offset="0" stop-color="#3CC4F0"/><stop offset="0.55" stop-color="#30C8A8"/><stop offset="1" stop-color="#66E050"/></linearGradient>
<linearGradient id="gE2" x1="0" y1="0" x2="0.8" y2="1"><stop offset="0" stop-color="#1A96E8"/><stop offset="0.6" stop-color="#0E6ACC"/><stop offset="1" stop-color="#0A4A9A"/></linearGradient></defs>
<path d="M0.3 11 A12 11.8 0 0 1 24 11 L23.8 14 Q23 16.5 21.6 16.9 L17 16.8 Q14.5 16.2 14 13 Q13.8 9.5 10.5 7 Q7 5.6 4 7 Q1.6 8 0.3 11 Z" fill="url(#gE1)"/>
<path d="M0.3 11 Q1.6 8 5.3 6.6 Q8.4 6.4 10.3 8.6 Q9 11 9.4 12.8 Q10 16.2 14.7 18.1 Q18.5 19 21.9 18.4 Q19.5 23.5 12 24.7 Q4 24.5 1 18.5 Q0 15 0.3 11 Z" fill="url(#gE2)"/>
<circle cx="11.9" cy="12.6" r="2.6" fill="#DCE4F4"/>
</svg>
<div style="position:absolute;left:1120px;top:1035px;width:38px;height:38px;background:#EDF1FB;border-radius:5px;box-shadow:0 0 0 1px #E2E7F2"></div>
<svg style="position:absolute;left:1127px;top:1042px" width="24" height="24" viewBox="0 0 24 24">
<defs><linearGradient id="gApp" x1="0" y1="0" x2="1" y2="0"><stop offset="0" stop-color="#B8C6E8"/><stop offset="0.5" stop-color="#5A6DB0"/><stop offset="1" stop-color="#A0B0E0"/></linearGradient></defs>
<rect x="0" y="0" width="24" height="24" fill="url(#gApp)"/>
<path d="M1 1 H23 V5 Q23 7 20 7 Q12 8 4 7 Q1 7 1 5 Z" fill="#000"/>
<path d="M1 23 H23 V19 Q23 17 20 17 Q12 16 4 17 Q1 17 1 19 Z" fill="#000"/>
<path d="M6 9 L18 9 L16 12 L18 15 L6 15 L8 12 Z" fill="#3A4A9A"/>
<ellipse cx="12" cy="12" rx="2" ry="1" fill="#C0C8F0"/></svg>
<div style="position:absolute;left:1131px;top:1070px;width:16px;height:3px;background:#0067C0;border-radius:2px"></div>
<svg style="position:absolute;left:1171px;top:1042px" width="24" height="24" viewBox="0 0 24 24">
<path d="M12 1 Q22 1 23 9 Q23 14 18 14 Q15 14 15 17 Q15 22 10 23 Q1 22 1 12 Q1 1 12 1 Z" fill="#2C9CE0"/>
<circle cx="4.5" cy="12" r="2" fill="#E5562E"/><circle cx="7" cy="7" r="2" fill="#2AA83A"/><circle cx="12" cy="5" r="2" fill="#F2CE1A"/>
<path d="M11 13 h3 M12.5 11.5 v3" stroke="#E8F4FF" stroke-width="1.2"/>
<path d="M19 8 L21 8 L20.5 23 L18.5 23 Z" fill="#B0782A"/><rect x="18.3" y="7" width="3" height="3" fill="#E8E2D0"/></svg>
<div style="position:absolute;left:1180px;top:1070px;width:6px;height:3px;background:#7A7F8A;border-radius:2px"></div>
<svg style="position:absolute;left:1689px;top:1050px" width="13" height="9" viewBox="0 0 13 9"><path d="M1 7.5 L6.5 2 L12 7.5" fill="none" stroke="#222" stroke-width="1.2"/></svg>
<div style="position:absolute;left:1721px;top:1049.30px;font-size:11.3px;font-weight:400;color:#1a1a1a;line-height:1;white-space:nowrap;">ENG</div>
<svg style="position:absolute;left:1762px;top:1045px" width="19" height="18" viewBox="0 0 19 18">
<path d="M1.5 2 H12 M1.5 2 V13 H9" fill="none" stroke="#222" stroke-width="1.1"/><path d="M4 16.5 H11 M7 13 V16.5" stroke="#222" stroke-width="1.1"/>
<rect x="13" y="1" width="4" height="5" rx="1" fill="none" stroke="#222" stroke-width="1"/><path d="M15 6 V17 M11 17 H16" stroke="#222" stroke-width="1.1"/></svg>
<svg style="position:absolute;left:1786px;top:1047px" width="18" height="15" viewBox="0 0 18 15">
<path d="M1.5 5 H4 L8 1.5 V13.5 L4 10 H1.5 Z" fill="none" stroke="#222" stroke-width="1.1"/>
<path d="M10.5 5 Q12 7.5 10.5 10 M12.8 3.5 Q15 7.5 12.8 11.5 M15 2 Q18 7.5 15 13" fill="none" stroke="#222" stroke-width="1.1"/></svg>
<div style="position:absolute;right:43px;top:1040.02px;font-size:11.5px;font-weight:400;color:#1a1a1a;line-height:1;white-space:nowrap;">09:04</div>
<div style="position:absolute;right:43px;top:1056.02px;font-size:11.5px;font-weight:400;color:#1a1a1a;line-height:1;white-space:nowrap;">08.10.2024</div>
<svg style="position:absolute;left:1885px;top:1046px" width="14" height="17" viewBox="0 0 14 17">
<path d="M7 1 Q12 1 12 7 V11 L13.5 13 H0.5 L2 11 V7 Q2 1 7 1 Z" fill="#0A4CA8"/><ellipse cx="7" cy="15" rx="2.2" ry="1.5" fill="#0A4CA8"/></svg></body></html>
